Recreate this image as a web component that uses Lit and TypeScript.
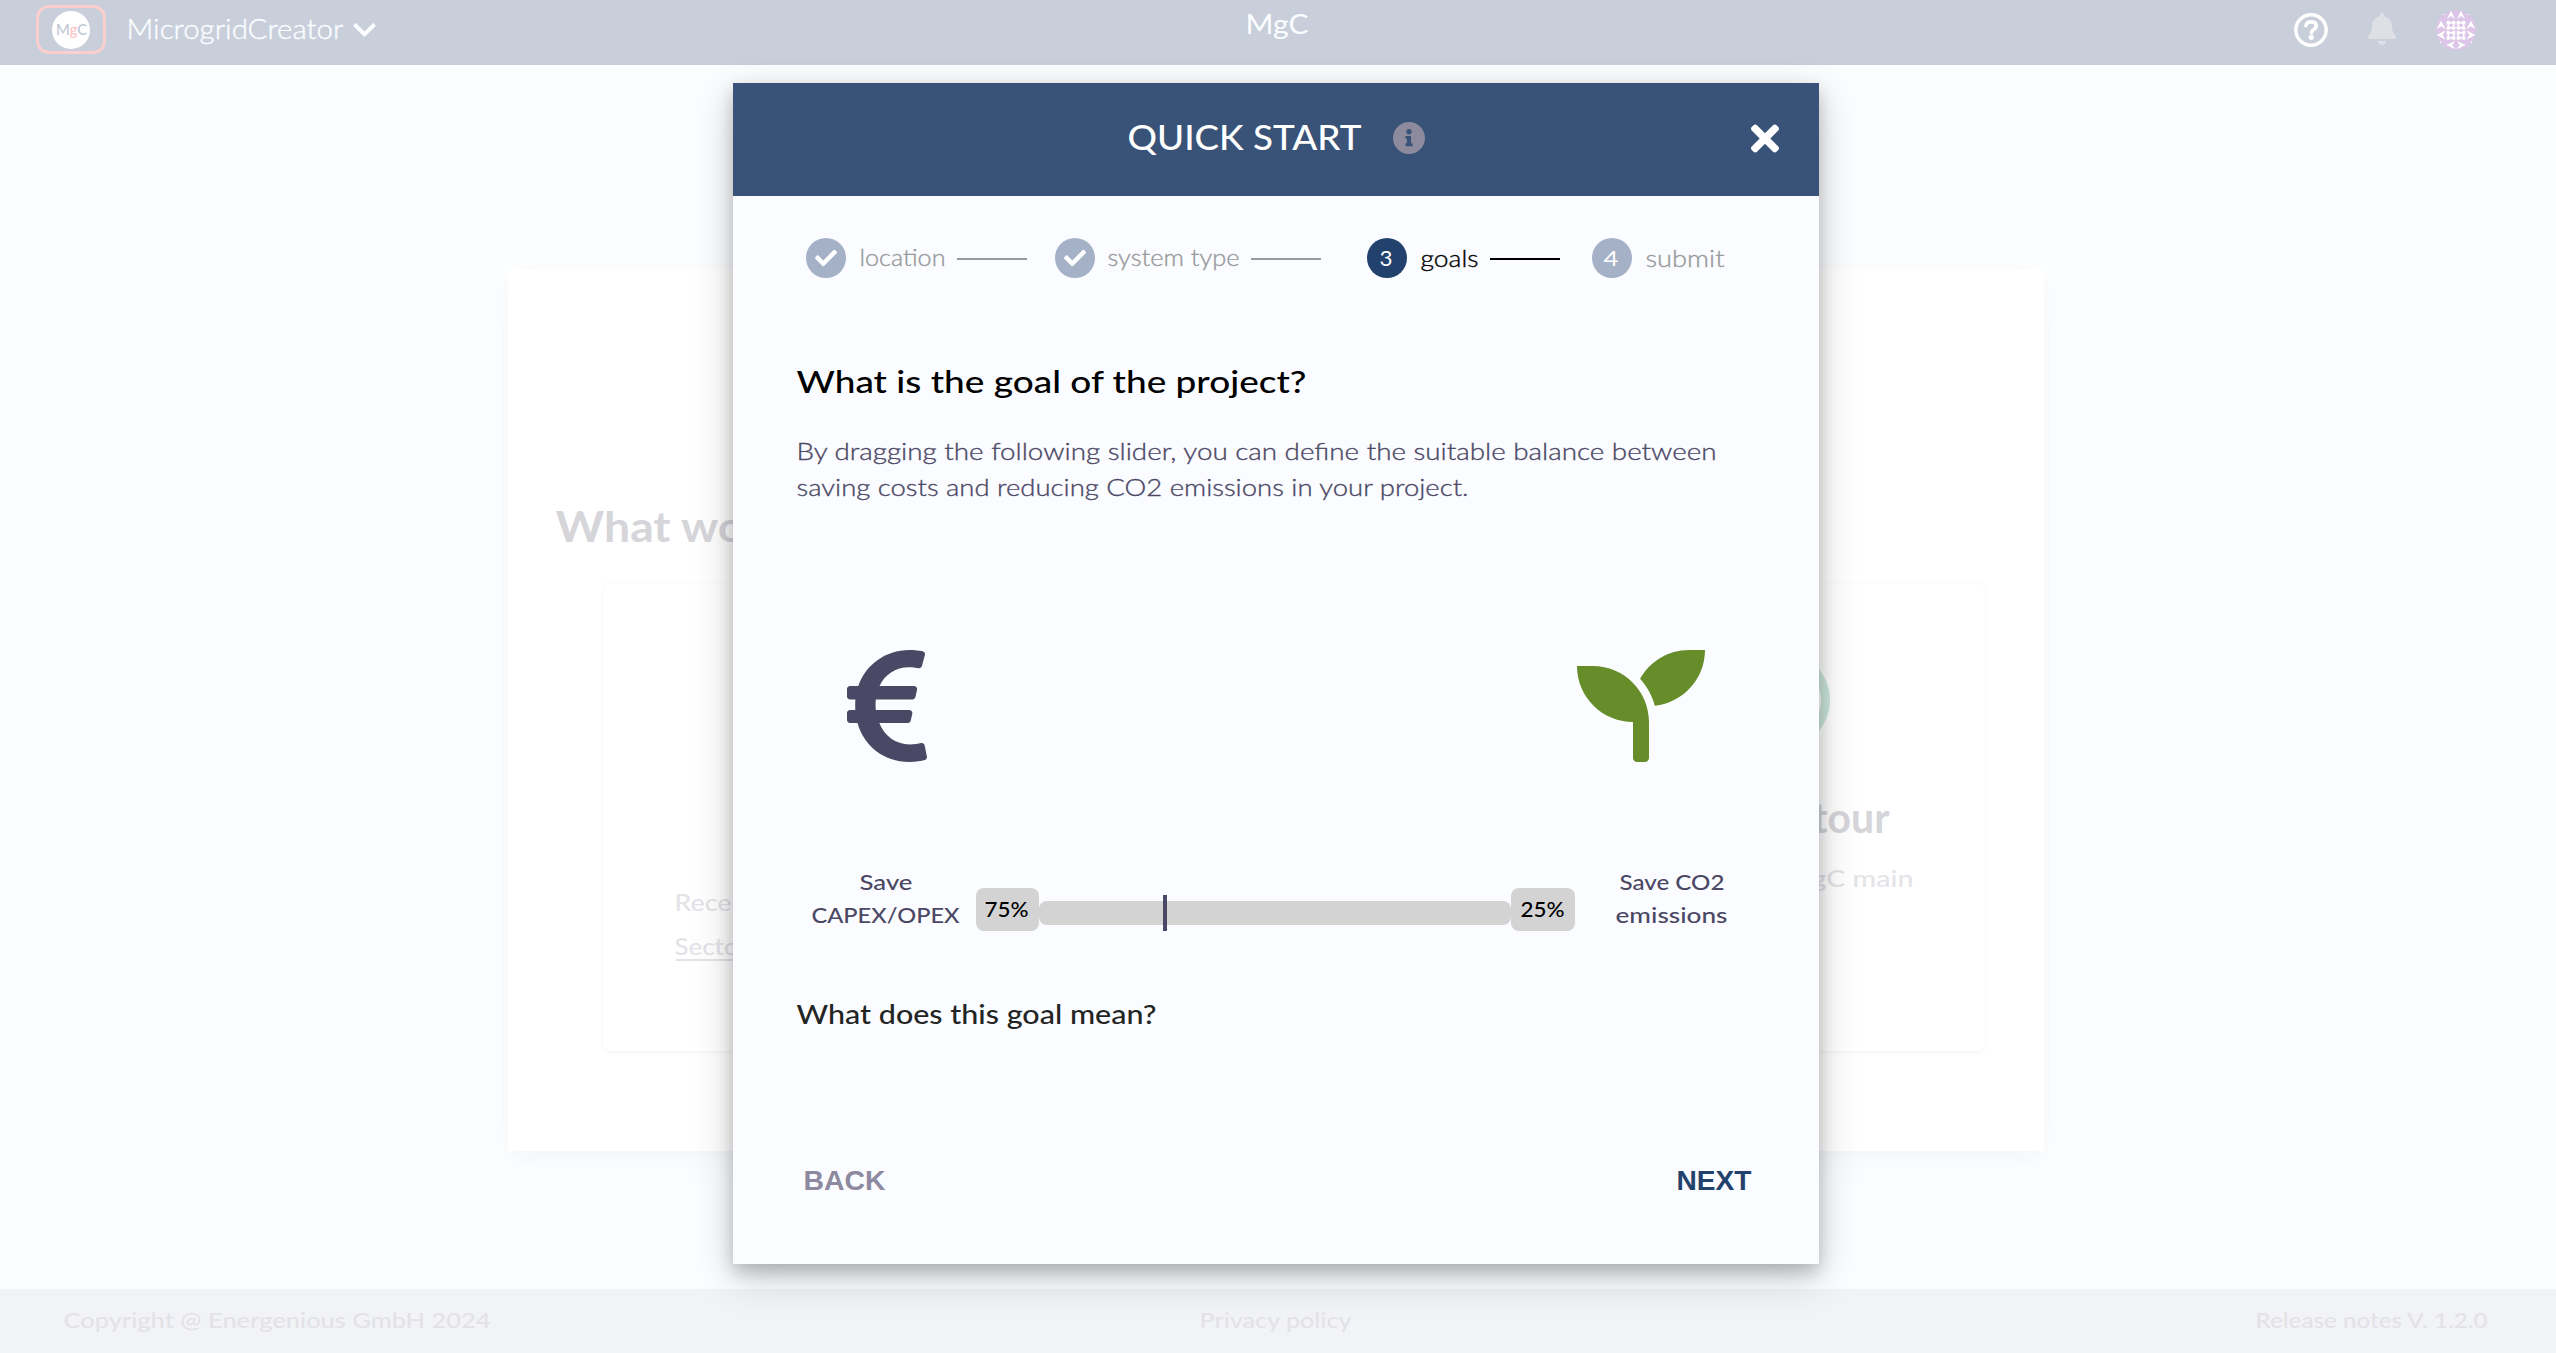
import { LitElement, html, svg, css } from "lit";
import { customElement, state } from "lit/decorators.js";

/* One line of text set to an exact measure; the box is one em high. */
const line = (text: string, width: number, size: number, cls = "") => html`<svg
  class="line ${cls}" width=${width} height=${size} viewBox="0 0 ${width} ${size}">
  <text x="-1.5" y=${size * 0.85} font-size=${size} textLength=${width + 1} lengthAdjust="spacingAndGlyphs">${text}</text>
</svg>`;

const icon = (cls: string, box: string, d: string) => html`<svg class="icon ${cls}" viewBox=${box}>${svg`<path d=${d}></path>`}</svg>`;

const CHEVRON = "M207.029 381.476L12.686 187.132c-9.373-9.373-9.373-24.569 0-33.941l22.667-22.667c9.357-9.357 24.522-9.375 33.901-.04L224 284.505l154.745-154.021c9.379-9.335 24.544-9.317 33.901.04l22.667 22.667c9.373 9.373 9.373 24.569 0 33.941L240.971 381.476c-9.373 9.372-24.569 9.372-33.942 0z";
const BELL = "M224 512c35.32 0 63.97-28.65 63.97-64H160.03c0 35.35 28.65 64 63.97 64zm215.39-149.71c-19.32-20.76-55.47-51.99-55.47-154.29 0-77.7-54.48-139.9-127.94-155.16V32c0-17.67-14.32-32-31.98-32s-31.98 14.33-31.98 32v20.84C118.56 68.1 64.08 130.3 64.08 208c0 102.3-36.15 133.53-55.47 154.29-6 6.45-8.66 14.16-8.61 21.71.11 16.4 12.98 32 32.1 32h383.8c19.12 0 32-15.6 32.1-32 .05-7.55-2.61-15.27-8.61-21.71z";
const CHECK = "M173.898 439.404l-166.4-166.4c-9.997-9.997-9.997-26.206 0-36.204l36.203-36.204c9.997-9.998 26.207-9.998 36.204 0L192 312.69 432.095 72.596c9.997-9.997 26.207-9.997 36.204 0l36.203 36.204c9.997 9.997 9.997 26.206 0 36.204l-294.4 294.401c-9.998 9.997-26.207 9.997-36.204-.001z";
const TIMES = "M242.72 256l100.07-100.07c12.28-12.28 12.28-32.19 0-44.48l-22.24-22.24c-12.28-12.28-32.19-12.28-44.48 0L176 189.28 75.93 89.21c-12.28-12.28-32.19-12.28-44.48 0L9.21 111.45c-12.28 12.28-12.28 32.19 0 44.48L109.28 256 9.21 356.07c-12.28 12.28-12.28 32.19 0 44.48l22.24 22.24c12.28 12.28 32.2 12.28 44.48 0L176 322.72l100.07 100.07c12.28 12.28 32.2 12.28 44.48 0l22.24-22.24c12.28-12.28 12.28-32.19 0-44.48L242.72 256z";
const INFO = "M256 8C119.043 8 8 119.083 8 256c0 136.997 111.043 248 248 248s248-111.003 248-248C504 119.083 392.957 8 256 8zm0 110c23.196 0 42 18.804 42 42s-18.804 42-42 42-42-18.804-42-42 18.804-42 42-42zm56 254c0 6.627-5.373 12-12 12h-88c-6.627 0-12-5.373-12-12v-24c0-6.627 5.373-12 12-12h12v-64h-12c-6.627 0-12-5.373-12-12v-24c0-6.627 5.373-12 12-12h64c6.627 0 12 5.373 12 12v100h12c6.627 0 12 5.373 12 12v24z";
const EURO = "M310.706 413.765c-1.314-6.63-7.835-10.872-14.424-9.369-10.692 2.439-27.422 5.413-45.426 5.413-56.763 0-101.929-34.79-121.461-85.449h113.689a12 12 0 0 0 11.708-9.369l6.373-28.36c1.686-7.502-4.019-14.631-11.708-14.631H115.22c-1.21-14.328-1.414-28.287.137-42.245H261.95a12 12 0 0 0 11.723-9.434l6.512-29.755c1.638-7.484-4.061-14.566-11.723-14.566H130.184c20.633-44.991 62.69-75.03 117.619-75.03 14.486 0 28.564 2.25 37.851 4.145 6.216 1.268 12.347-2.498 14.002-8.623l11.991-44.368c1.822-6.741-2.465-13.616-9.326-14.917C290.217 34.912 270.71 32 249.635 32 152.451 32 74.03 92.252 45.075 176H12c-6.627 0-12 5.373-12 12v29.755c0 6.627 5.373 12 12 12h21.569c-1.009 13.607-1.181 29.287-.181 42.245H12c-6.627 0-12 5.373-12 12v28.36c0 6.627 5.373 12 12 12h30.114C67.139 414.692 145.264 480 249.635 480c26.301 0 48.562-4.544 61.101-7.788 6.167-1.595 10.027-7.708 8.788-13.957l-8.818-44.49z";
const SEEDLING = "M64 96H0c0 123.7 100.3 224 224 224v144c0 8.8 7.2 16 16 16h32c8.8 0 16-7.2 16-16V320C288 196.3 187.7 96 64 96zm384-64c-84.2 0-157.4 46.5-195.7 115.2 27.7 30.2 48.2 66.9 59 107.6C424 243.1 512 147.9 512 32h-64z";

const shared = css`
  :host { display: block; font-family: Lato, "Open Sans", sans-serif; }
  svg { display: block; flex: none; }
  .line { overflow: visible; font-weight: 500; fill: currentColor; }
  .light { font-weight: 300; stroke: currentColor; stroke-width: .35px; }
  .regular { font-weight: 400; }
  .bold { font-weight: 700; }
  .icon { fill: currentColor; }
`;

@customElement("mg-header")
class MgHeader extends LitElement {
  static styles = [shared, css`
    .bar { display: grid; grid-template-columns: 1fr auto 1fr; height: 65px; background: #c8cfdb; color: #fbfdff; align-items: start; }
    .brand { display: flex; align-items: center; padding: 5px 0 0 36px; }
    .logo { box-sizing: border-box; width: 70px; height: 49px; border: 3px solid #fbcfce; border-radius: 13px; display: grid; place-items: center; margin-right: 22px; }
    .disc { width: 38px; height: 38px; border-radius: 50%; background: #fff; display: grid; place-items: center; color: #bfc6d5; }
    .disc .line { font-weight: 500; }
    .g { fill: #fbc3c4; }
    .chevron { width: 23px; height: 26px; margin-left: 9px; }
    .title { padding-top: 12px; }
    .tools { display: flex; justify-content: flex-end; align-items: center; padding: 10px 80px 0 0; height: 40px; }
    .help { width: 34px; height: 34px; margin-right: 40px; }
    .bell { width: 28px; height: 32px; color: #dfe0e6; margin: -2px 40px 0 0; }
    .avatar { width: 40px; height: 40px; }
  `];
  render() {
    return html`<header class="bar">
      <div class="brand">
        <div class="logo"><div class="disc">
          <svg class="line" width="31" height="15" viewBox="0 0 31 15"><text y="12.6" font-size="14.5" textLength="31" lengthAdjust="spacingAndGlyphs">M<tspan class="g">g</tspan>C</text></svg>
        </div></div>
        ${line("MicrogridCreator", 216, 26.5, "light")}
        ${icon("chevron", "0 0 448 512", CHEVRON)}
      </div>
      <div class="title">${line("MgC", 62, 26, "regular")}</div>
      <div class="tools">
        <svg class="help" viewBox="0 0 34 34" fill="none" stroke="#fff">
          <circle cx="17" cy="17" r="15.2" stroke-width="3.4"></circle>
          <path d="M11.9 12.6C12.4 10 14.3 8.9 17 8.9c3.2 0 5.3 1.6 5.3 4.2 0 3.6-4.9 3.3-4.9 6.6" stroke-width="3.6" stroke-linecap="round"></path>
          <circle cx="17.3" cy="24.3" r="2.6" fill="#fff" stroke="none"></circle>
        </svg>
        ${icon("bell", "0 0 448 512", BELL)}
        <svg class="avatar" viewBox="0 0 120 120">
          <circle cx="60" cy="60" r="60" fill="#dcc5e7"></circle>
          <g fill="#fff">
            <path d="M45 2L57 27L45 18L33 27ZM75 2L87 27L75 18L63 27Z"></path>
            <path d="M15 32L29 58L15 49L2 58ZM105 32L118 58L105 49L91 58Z"></path>
            <path d="M2 75L29 61L20 75L29 89ZM118 75L91 61L100 75L91 89Z"></path>
            <path d="M31 105L58 92L49 105L58 118ZM89 105L62 92L71 105L62 118Z"></path>
            <path d="M32 33H58V59H32ZM62 33H88V59H62ZM32 63H58V89H32ZM62 63H88V89H62Z"></path>
            <path d="M22 12l7 3h-7zM98 12l-7 3h7zM12 92l6 6-5 2zM108 92l-6 6 5 2z"></path>
          </g>
          <g fill="#dcc5e7">
            ${[[45, 46], [75, 46], [45, 76], [75, 76]].map(([x, y]) => svg`
              <rect x=${x - 5} y=${y - 5} width="10" height="10"></rect>
              <path d="M${x - 6} ${y - 13}h12l-6 4zM${x - 6} ${y + 13}h12l-6-4zM${x - 13} ${y - 6}v12l4-6zM${x + 13} ${y - 6}v12l-4-6z"></path>`)}
          </g>
        </svg>
      </div>
    </header>`;
  }
}

@customElement("mg-start")
class MgStart extends LitElement {
  static styles = [shared, css`
    :host { flex: 1; padding: 204px 512px 0 508px; }
    .card { box-sizing: border-box; height: 882px; background: #fff; padding: 237px 0 0 49px; color: #d6d5da;
      box-shadow: 0 8px 16px rgba(0, 0, 0, .016), 0 12px 40px rgba(0, 0, 0, .02); }
    .panel { box-sizing: border-box; display: flex; justify-content: space-between; width: 1382px; height: 468px; margin: 35px 0 0 46px;
      border-radius: 8px; box-shadow: 0 0 3px rgba(0, 0, 0, .04), 0 2px 6px rgba(0, 0, 0, .03); }
    .recent { padding: 309px 0 0 73px; color: #e3e3e8; display: flex; flex-direction: column; gap: 21px; }
    .link { border-bottom: 2px solid #e3e3e8; height: 23px; }
    .tour { width: 254px; padding-top: 68px; }
    .ring { box-sizing: border-box; width: 99px; height: 98px; border: 9px solid #cde8de; border-radius: 50%; margin-bottom: 48px; }
    .name { margin-left: 83px; }
    .note { margin: 29px 0 0 82px; color: #e3e3e8; }
  `];
  render() {
    return html`<section class="card">
      ${line("What wo", 188, 42, "bold")}
      <div class="panel">
        <div class="recent">
          ${line("Rece", 56, 22.5)}
          <div class="link">${line("Secto", 63, 22.5)}</div>
        </div>
        <div class="tour">
          <div class="ring"></div>
          <div class="name">${line("tour", 76, 42, "bold")}</div>
          <div class="note">${line("gC main", 101, 22.5)}</div>
        </div>
      </div>
    </section>`;
  }
}

@customElement("mg-footer")
class MgFooter extends LitElement {
  static styles = [shared, css`
    .bar { display: grid; grid-template-columns: 1fr auto 1fr; height: 64px; box-sizing: border-box; padding: 20px 68px 0 65px; background: #f2f3f7; color: #e3e2e7; }
    .end { justify-self: end; }
  `];
  render() {
    return html`<footer class="bar">
      <div>${line("Copyright @ Energenious GmbH 2024", 426, 22)}</div>
      <div>${line("Privacy policy", 151, 22)}</div>
      <div class="end">${line("Release notes V. 1.2.0", 231, 22)}</div>
    </footer>`;
  }
}

@customElement("mg-quick-start")
class MgQuickStart extends LitElement {
  @state() private costShare = 75;

  static styles = [shared, css`
    :host { width: 1086px; height: 1181px; background: #fbfcff; box-shadow: 0 8px 16px rgba(0, 0, 0, .2), 0 12px 40px rgba(0, 0, 0, .19); }
    .head { display: flex; align-items: center; height: 113px; box-sizing: border-box; padding: 0 40px 3px 396px; background: #395277; color: #fff; }
    .info { width: 32px; height: 32px; margin-left: 31px; color: #8d8a9d; }
    .close { width: 28px; height: 41px; margin-left: auto; }
    .steps { display: flex; align-items: center; height: 123px; padding-left: 73px; }
    .step { display: flex; align-items: center; color: #999a9d; }
    .step.now { color: #000; }
    .dot { width: 40px; height: 40px; border-radius: 50%; background: #a4b1c6; color: #fff; display: grid; place-items: center; }
    .now .dot { background: #23416d; }
    .check { width: 22px; height: 22px; }
    .rule { height: 2px; width: 70px; background: currentColor; margin: 2px 0 0 11px; }
    .step .label { margin: 2px 0 0 15px; }
    .type { margin-left: 28px; }
    .type .label { margin-left: 14px; }
    .goals { margin: 1px 0 0 46px; }
    .submit { margin: 1px 0 0 32px; }
    .body { padding: 47px 0 0 65px; }
    .heading { color: #000; }
    .text { display: grid; gap: 12px; margin-top: 42px; color: #4b4865; }
    .icons { display: flex; justify-content: space-between; width: 858px; margin: 142px 0 0 49px; }
    .euro { width: 80px; height: 128px; color: #4b4865; }
    .plant { width: 128px; height: 128px; color: #668d29; }
    .slider { display: flex; align-items: flex-start; margin: 101px 0 0 15px; color: #4b4865; }
    .caption { display: grid; justify-items: center; gap: 11px; }
    .cost { width: 147px; margin-right: 16px; }
    .co2 { width: 111px; margin-left: 42px; }
    .pill { display: grid; place-items: center; width: 63px; height: 43px; margin-top: 17px; border-radius: 8px; background: #d3d3d3; color: #000; }
    .high { width: 64px; }
    .track { position: relative; width: 472px; height: 24px; margin-top: 30px; border-radius: 8px; background: #d3d3d3; }
    .thumb { position: absolute; top: -6px; width: 4px; height: 36px; background: #4b4865; }
    .question { margin-top: 71px; color: #222524; }
    .actions { display: flex; justify-content: space-between; width: 947px; margin: 138px 0 0 7px; }
    .actions .line { font-family: "Liberation Sans", Arial, sans-serif; font-weight: 700; }
    .back { color: #8d8a9f; }
    .next { color: #23416d; }
  `];
  render() {
    const rest = 100 - this.costShare;
    return html`
      <div class="head">
        ${line("QUICK START", 233, 34)}
        ${icon("info", "8 8 496 496", INFO)}
        ${icon("close", "0 0 352 512", TIMES)}
      </div>
      <div class="steps">
        <div class="step location"><div class="dot">${icon("check", "0 0 512 512", CHECK)}</div>${line("location", 85, 22.5, "light label")}<div class="rule"></div></div>
        <div class="step type"><div class="dot">${icon("check", "0 0 512 512", CHECK)}</div>${line("system type", 131, 22.5, "light label")}<div class="rule"></div></div>
        <div class="step goals now"><div class="dot">${line("3", 12, 21, "regular")}</div>${line("goals", 57, 22.5, "light label")}<div class="rule"></div></div>
        <div class="step submit"><div class="dot">${line("4", 14, 21, "regular")}</div>${line("submit", 78, 22.5, "light label")}</div>
      </div>
      <div class="body">
        <div class="heading">${line("What is the goal of the project?", 509, 31.5)}</div>
        <div class="text">
          ${line("By dragging the following slider, you can define the suitable balance between", 919, 24, "light")}
          ${line("saving costs and reducing CO2 emissions in your project.", 671, 24, "light")}
        </div>
        <div class="icons">${icon("euro", "0 0 320 512", EURO)}${icon("plant", "0 0 512 512", SEEDLING)}</div>
        <div class="slider">
          <div class="caption cost">${line("Save", 52, 22)}${line("CAPEX/OPEX", 147, 22)}</div>
          <div class="pill">${line(`${this.costShare}%`, 43, 21)}</div>
          <div class="track"><div class="thumb" style="left:${rest * 1.05}%"></div></div>
          <div class="pill high">${line(`${rest}%`, 43, 21)}</div>
          <div class="caption co2">${line("Save CO2", 104, 22)}${line("emissions", 111, 22)}</div>
        </div>
        <div class="question">${line("What does this goal mean?", 359, 26)}</div>
        <div class="actions">
          <div class="back">${line("BACK", 81, 28.5)}</div>
          <div class="next">${line("NEXT", 74, 28.5)}</div>
        </div>
      </div>`;
  }
}

@customElement("app-root")
class AppRoot extends LitElement {
  static styles = css`
    :host { display: block; }
    .page { position: relative; display: flex; flex-direction: column; height: 1353px; background: #fbfdff; overflow: hidden; }
    mg-quick-start { position: absolute; left: 733px; top: 83px; }
  `;
  render() {
    return html`<div class="page">
      <mg-header></mg-header>
      <mg-start></mg-start>
      <mg-footer></mg-footer>
      <mg-quick-start></mg-quick-start>
    </div>`;
  }
}
